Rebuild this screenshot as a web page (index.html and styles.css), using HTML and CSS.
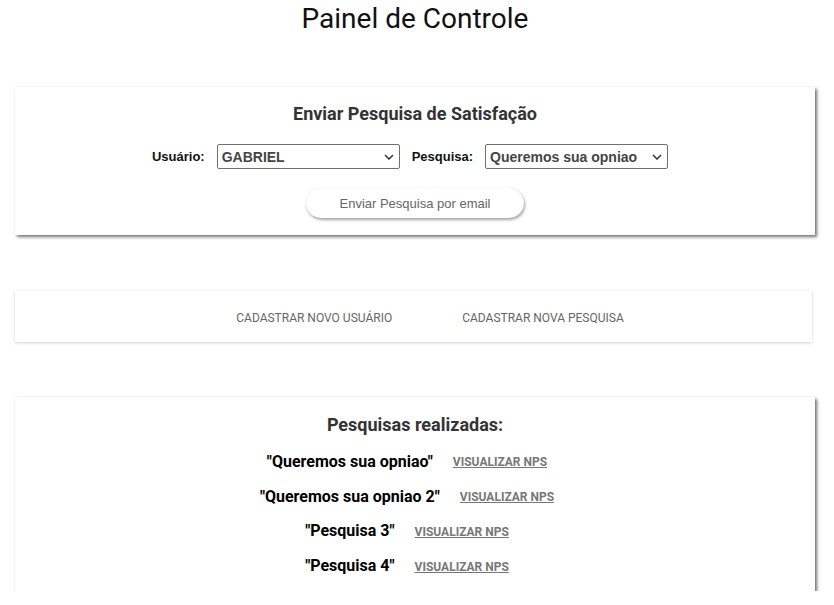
FILE: index.html
```html
<!DOCTYPE html>
<html lang="pt">
<head>
<meta charset="utf-8">
<title>Painel de Controle</title>
<link rel="stylesheet" href="styles.css">
</head>
<body>
<main class="page">
  <h1 class="title">Painel de Controle</h1>

  <section class="card card-send">
    <h2 class="card-heading">Enviar Pesquisa de Satisfação</h2>
    <div class="form-row">
      <label class="field-label" for="usuario">Usuário:</label>
      <div class="select-wrap">
        <select id="usuario" class="select"><option>GABRIEL</option></select>
        <svg class="chev" viewBox="0 0 10 6" width="10" height="6"><path d="M1 1l4 4 4-4" fill="none" stroke="#333" stroke-width="1.5"/></svg>
      </div>
      <label class="field-label" for="pesquisa">Pesquisa:</label>
      <div class="select-wrap">
        <select id="pesquisa" class="select"><option>Queremos sua opniao</option></select>
        <svg class="chev" viewBox="0 0 10 6" width="10" height="6"><path d="M1 1l4 4 4-4" fill="none" stroke="#333" stroke-width="1.5"/></svg>
      </div>
    </div>
    <button class="send-btn" type="button">Enviar Pesquisa por email</button>
  </section>

  <nav class="card card-nav">
    <a class="nav-link" href="#">CADASTRAR NOVO USUÁRIO</a>
    <a class="nav-link" href="#">CADASTRAR NOVA PESQUISA</a>
  </nav>

  <section class="card card-list">
    <h2 class="card-heading">Pesquisas realizadas:</h2>
    <ul class="survey-list">
      <li class="survey-item"><span class="survey-name">"Queremos sua opniao"</span><a class="nps-link" href="#">VISUALIZAR NPS</a></li>
      <li class="survey-item"><span class="survey-name">"Queremos sua opniao 2"</span><a class="nps-link" href="#">VISUALIZAR NPS</a></li>
      <li class="survey-item"><span class="survey-name">"Pesquisa 3"</span><a class="nps-link" href="#">VISUALIZAR NPS</a></li>
      <li class="survey-item"><span class="survey-name">"Pesquisa 4"</span><a class="nps-link" href="#">VISUALIZAR NPS</a></li>
    </ul>
  </section>
</main>
</body>
</html>
```
FILE: styles.css
```css
* { box-sizing: border-box; }
html, body { margin: 0; padding: 0; background: #fff; }
body { font-family: Roboto, "Liberation Sans", Arial, sans-serif; color: #000; }

.page {
  width: 800px;
  margin-left: 15px;
  display: flex;
  flex-direction: column;
}

.title {
  margin: 0;
  padding-top: 2px;
  height: 87px;
  font-size: 28px;
  font-weight: 400;
  line-height: 34px;
  text-align: center;
  color: #111;
}

.card {
  background: #fff;
  box-shadow: 2px 2px 3px rgba(0,0,0,0.55), 0 0 2px rgba(0,0,0,0.06);
}

.card-heading {
  margin: 0;
  font-family: Roboto, sans-serif;
  font-size: 18px;
  font-weight: 700;
  line-height: 22px;
  color: #333;
  text-align: center;
}

.card-send {
  height: 148px;
  padding-top: 16px;
  display: flex;
  flex-direction: column;
  align-items: center;
}

.form-row {
  margin-top: 19px;
  display: flex;
  align-items: center;
  justify-content: center;
  gap: 12px;
  margin-right: 10px;
}

.field-label {
  font-family: "Liberation Sans", Arial, sans-serif;
  font-size: 13px;
  font-weight: 700;
  color: #111;
}

.select-wrap {
  position: relative;
  width: 183px;
  height: 25px;
}

.select {
  appearance: none;
  -webkit-appearance: none;
  width: 100%;
  height: 100%;
  border: 1px solid #707070;
  border-radius: 2px;
  background: #fff;
  padding: 0 20px 0 4px;
  font-family: "Liberation Sans", Arial, sans-serif;
  font-size: 14px;
  font-weight: 700;
  color: #444;
}

.chev {
  position: absolute;
  right: 6px;
  top: 10px;
  pointer-events: none;
}

.send-btn {
  margin-top: 19px;
  width: 218px;
  height: 30px;
  border: none;
  border-radius: 15px;
  background: #fff;
  box-shadow: 1px 2px 3px rgba(0,0,0,0.35), 0 0 1px rgba(0,0,0,0.12);
  font-family: "Liberation Sans", Arial, sans-serif;
  font-size: 13px;
  color: #666;
  cursor: pointer;
}

.card-nav {
  margin-top: 56px;
  width: 797px;
  height: 51px;
  display: flex;
  align-items: center;
  justify-content: center;
  gap: 70px;
  padding-left: 33px;
  padding-top: 3px;
  box-shadow: 0 1px 3px rgba(0,0,0,0.18), 0 0 1px rgba(0,0,0,0.05);
}

.nav-link {
  font-family: Roboto, sans-serif;
  font-size: 12px;
  color: #666;
  text-decoration: none;
}

.card-list {
  margin-top: 55px;
  height: 194px;
  padding-top: 17px;
  display: flex;
  flex-direction: column;
  align-items: center;
}

.survey-list {
  list-style: none;
  margin: 8px 16px 0 0;
  padding: 0;
  display: flex;
  flex-direction: column;
  align-items: center;
}

.survey-item {
  height: 34.8px;
  display: flex;
  align-items: center;
  gap: 20px;
}

.survey-name {
  font-family: Roboto, sans-serif;
  font-size: 16px;
  font-weight: 700;
  color: #000;
}

.nps-link {
  font-family: Roboto, sans-serif;
  font-size: 12px;
  font-weight: 700;
  color: #777;
  text-decoration: underline;
  padding-top: 2px;
}
```
